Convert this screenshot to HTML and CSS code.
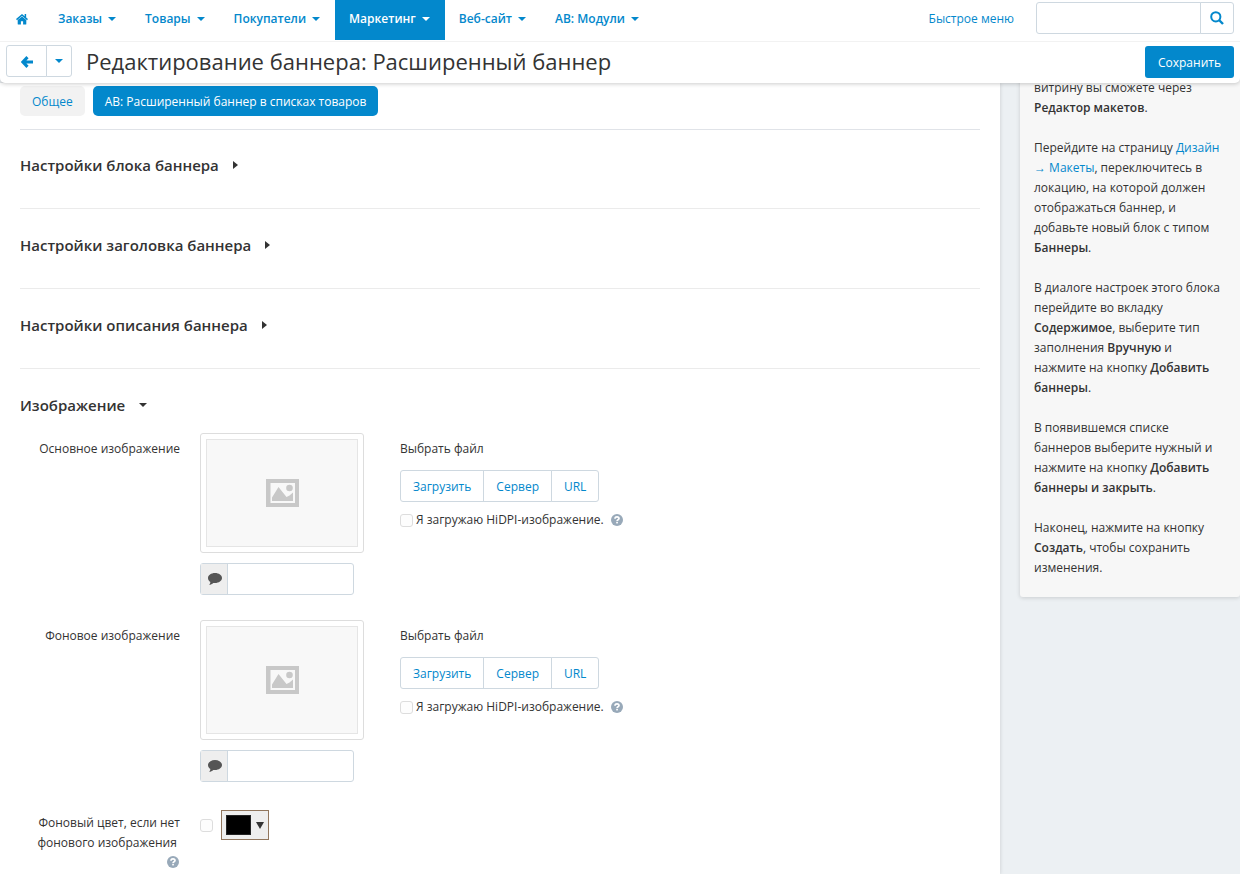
FILE: index.html
```html
<!DOCTYPE html>
<html lang="ru">
<head>
<meta charset="utf-8">
<title>Редактирование баннера: Расширенный баннер</title>
<link rel="stylesheet" href="styles.css">
</head>
<body>
<svg class="sprite" aria-hidden="true">
  <symbol id="i-help" viewBox="0 0 12 12">
    <circle cx="6" cy="6" r="6" fill="currentColor"/>
    <path d="M4 4.700C4 3.400 4.900 2.800 6 2.800s2 .7 2 1.700C8 5.800 6.100 5.700 6.100 7" fill="none" stroke="#fff" stroke-width="1.700"/>
    <rect x="5.200" y="7.800" width="1.700" height="1.600" fill="#fff"/>
  </symbol>
  <symbol id="i-comment" viewBox="0 0 14 12">
    <path d="M7 0c3.900 0 7 2.200 7 5s-3.100 5-7 5c-.6 0-1.200 0-1.700-.1C4.200 10.900 2.800 11.600 1.200 11.800c.7-.8 1.100-1.600 1.200-2.700C.9 8.200 0 6.700 0 5c0-2.800 3.100-5 7-5z" fill="currentColor"/>
  </symbol>
  <symbol id="i-image" viewBox="0 0 33 28">
    <path fill-rule="evenodd" d="M0 0h33v28H0zM4.500 4v20h24.500V4z" fill="currentColor"/>
    <path d="M6 22v-3.500L12.500 8l8 10 3-1.500 3.500-3V22z" fill="currentColor"/>
    <circle cx="23.500" cy="9" r="3.300" fill="currentColor"/>
  </symbol>
</svg>

<header class="header">
  <nav class="nav">
    <a class="nav-item nav-home" href="#" aria-label="Главная">
      <svg width="12" height="11" viewBox="0 0 12 11"><path d="M6 2.400 1.700 5.900V10c0 .4.3.6.6.6H4.900V7.300h2.200v3.300h2.600c.4 0 .6-.3.6-.6V5.900z" fill="currentColor"/><path d="M.5 5.600 6 1l5.500 4.600M9.400 0v3.500" fill="none" stroke="currentColor" stroke-width="1.500"/></svg>
    </a>
    <a class="nav-item" href="#">Заказы<i class="caret"></i></a>
    <a class="nav-item" href="#">Товары<i class="caret"></i></a>
    <a class="nav-item" href="#">Покупатели<i class="caret"></i></a>
    <a class="nav-item active" href="#">Маркетинг<i class="caret"></i></a>
    <a class="nav-item" href="#">Веб-сайт<i class="caret"></i></a>
    <a class="nav-item" href="#">АВ: Модули<i class="caret"></i></a>
    <a class="quick" href="#">Быстрое меню</a>
    <form class="search">
      <input type="text" aria-label="Поиск">
      <button type="button" aria-label="Найти">
        <svg width="14" height="14" viewBox="0 0 14 14" fill="none" stroke="currentColor"><circle cx="5.800" cy="5.800" r="4.600" stroke-width="2"/><path d="M9 9l4 4" stroke-width="2.400"/></svg>
      </button>
    </form>
  </nav>
  <div class="titlebar">
    <div class="group">
      <button class="back" type="button" aria-label="Назад">
        <svg width="12" height="12" viewBox="0 0 12 12" fill="none" stroke="currentColor" stroke-width="3"><path d="M6.500 1.100 1.900 6l4.600 4.900M2 6h10"/></svg>
      </button>
      <button class="back-menu" type="button" aria-label="История"><i class="caret"></i></button>
    </div>
    <h1>Редактирование баннера: Расширенный баннер</h1>
    <button class="save" type="button">Сохранить</button>
  </div>
</header>

<div class="page">
  <main class="main">
    <div class="tabs">
      <a class="tab" href="#">Общее</a>
      <a class="tab active" href="#">АВ: Расширенный баннер в списках товаров</a>
    </div>
    <section class="section"><h2>Настройки блока баннера<i class="caret right"></i></h2></section>
    <section class="section"><h2>Настройки заголовка баннера<i class="caret right"></i></h2></section>
    <section class="section"><h2>Настройки описания баннера<i class="caret right"></i></h2></section>
    <section class="section open">
      <h2>Изображение<i class="caret"></i></h2>
      <div class="fields">
        <div class="field">
          <label class="name" for="alt-main">Основное изображение</label>
          <div class="preview">
            <div class="frame"><div class="empty"><svg width="33" height="28"><use href="#i-image"/></svg></div></div>
            <div class="alt"><span><svg width="14" height="12"><use href="#i-comment"/></svg></span><input id="alt-main" type="text"></div>
          </div>
          <div class="file">
            <div>Выбрать файл</div>
            <div class="group choices"><button type="button">Загрузить</button><button type="button">Сервер</button><button type="button">URL</button></div>
            <label class="check"><input type="checkbox">Я загружаю HiDPI-изображение.<svg class="help" width="12" height="12"><use href="#i-help"/></svg></label>
          </div>
        </div>
        <div class="field">
          <label class="name" for="alt-back">Фоновое изображение</label>
          <div class="preview">
            <div class="frame"><div class="empty"><svg width="33" height="28"><use href="#i-image"/></svg></div></div>
            <div class="alt"><span><svg width="14" height="12"><use href="#i-comment"/></svg></span><input id="alt-back" type="text"></div>
          </div>
          <div class="file">
            <div>Выбрать файл</div>
            <div class="group choices"><button type="button">Загрузить</button><button type="button">Сервер</button><button type="button">URL</button></div>
            <label class="check"><input type="checkbox">Я загружаю HiDPI-изображение.<svg class="help" width="12" height="12"><use href="#i-help"/></svg></label>
          </div>
        </div>
        <div class="field">
          <label class="name" for="use-color">Фоновый цвет, если нет фонового изображения&nbsp;<svg class="help" width="12" height="12"><use href="#i-help"/></svg></label>
          <div class="color">
            <input id="use-color" type="checkbox">
            <button class="picker" type="button" aria-label="Выбрать цвет"><span class="swatch"></span><svg width="8" height="7" viewBox="0 0 8 7"><path d="M0 0h8L4 7z" fill="currentColor"/></svg></button>
          </div>
        </div>
      </div>
    </section>
  </main>
  <aside class="side">
    <div class="note">
      <p>витрину вы сможете через <b>Редактор макетов</b>.</p>
      <p>Перейдите на страницу <a href="#">Дизайн → Макеты</a>, переключитесь в локацию, на которой должен отображаться баннер, и добавьте новый блок с типом <b>Баннеры</b>.</p>
      <p>В диалоге настроек этого блока перейдите во вкладку <b>Содержимое</b>, выберите тип заполнения <b>Вручную</b> и нажмите на кнопку <b>Добавить баннеры</b>.</p>
      <p>В появившемся списке баннеров выберите нужный и нажмите на кнопку <b>Добавить баннеры и закрыть</b>.</p>
      <p>Наконец, нажмите на кнопку <b>Создать</b>, чтобы сохранить изменения.</p>
    </div>
  </aside>
</div>
</body>
</html>
```
FILE: styles.css
```css
* { box-sizing: border-box; }
body {
  margin: 0;
  min-height: 100vh;
  display: flex;
  flex-direction: column;
  background: #ecf0f3;
  color: #333;
  font: 12px/20px "Open Sans", "Noto Sans", sans-serif;
}
a { color: #0388cc; text-decoration: none; }
b { font-weight: 600; }
button, input { font: inherit; margin: 0; }
svg { display: block; }
.sprite { position: absolute; width: 0; height: 0; }

.caret {
  display: inline-block;
  border: 4px solid transparent;
  border-top-color: currentColor;
  border-bottom: 0;
}
.caret.right {
  border: 4px solid transparent;
  border-left: 5px solid currentColor;
  border-right: 0;
}

.header {
  position: relative;
  z-index: 2;
  background: #fff;
  border-radius: 0 0 5px 5px;
  box-shadow: 0 1px 4px rgba(0, 0, 0, .2);
}
.nav {
  display: flex;
  align-items: flex-start;
  height: 42px;
  padding: 0 6px 0 1px;
  border-bottom: 1px solid #f2f2f2;
}
.nav-item {
  display: flex;
  align-items: center;
  gap: 6px;
  height: 40px;
  padding: 0 15px 2px 14px;
  font-weight: 600;
}
.nav-home { padding: 0 16px 2px 15px; }
.nav-item.active { background: #0388cc; color: #fff; }
.quick { margin-left: auto; padding: 9px 22px 0 0; }
.search { display: flex; width: 198px; height: 32px; margin-top: 2px; }
.search input {
  flex: 1;
  min-width: 0;
  border: 1px solid #ced8e0;
  border-radius: 3px 0 0 3px;
}
.search button {
  width: 34px;
  margin-left: -1px;
  padding: 0 9px;
  border: 1px solid #ced8e0;
  border-radius: 0 3px 3px 0;
  background: #fff;
  color: #0388cc;
}

.titlebar {
  display: flex;
  align-items: flex-start;
  height: 41px;
  padding: 3px 6px 0;
}
.titlebar h1 {
  margin: 0 auto 0 14px;
  font-size: 22px;
  font-weight: 400;
  line-height: 32px;
}
.group { display: flex; }
.group button {
  display: flex;
  align-items: center;
  justify-content: center;
  height: 32px;
  padding: 1px 12px 0;
  border: 1px solid #ced8e0;
  background: #fff;
  color: #0388cc;
}
.group button + button { margin-left: -1px; }
.group button:first-child { border-radius: 3px 0 0 3px; }
.group button:last-child { border-radius: 0 3px 3px 0; }
.group .back { width: 41px; }
.group .back-menu { width: 26px; padding: 0; }
.save {
  height: 32px;
  margin-top: 1px;
  padding: 1px 13px 0;
  border: 0;
  border-radius: 3px;
  background: #0388cc;
  color: #fff;
}

.page { flex: 1; display: flex; gap: 20px; }
.main {
  flex: 1;
  padding: 3px 20px 0;
  background: #fff;
  box-shadow: 0 0 4px rgba(0, 0, 0, .15);
}
.tabs {
  display: flex;
  gap: 8px;
  padding-bottom: 13px;
  border-bottom: 1px solid #e0e3e8;
}
.tab {
  padding: 6px 12px 4px;
  border-radius: 5px;
  background: #f2f2f2;
}
.tab.active { background: #0388cc; color: #fff; }

.section { height: 80px; padding-top: 26px; border-bottom: 1px solid #ebebeb; }
.tabs + .section { height: 79px; padding-top: 25px; }
.section.open { height: auto; border: 0; }
.section h2 {
  display: flex;
  align-items: center;
  gap: 14px;
  margin: 0;
  font-size: 15px;
  font-weight: 600;
  line-height: 20px;
}
.fields { display: grid; gap: 25px; padding-top: 18px; }
.field { display: flex; gap: 20px; }
.name { width: 160px; padding-top: 6px; text-align: right; }
.help { color: #98a9b9; }
.name .help { margin: 3px 1px 0 auto; }
.preview { width: 180px; }
.frame {
  width: 164px;
  height: 120px;
  padding: 5px;
  border: 1px solid #ddd;
  border-radius: 3px;
}
.empty {
  display: flex;
  align-items: center;
  justify-content: center;
  height: 100%;
  border: 1px solid #e5e5e5;
  background: #f8f8f8;
  color: #c8c8c8;
}
.alt {
  display: flex;
  width: 154px;
  height: 32px;
  margin-top: 10px;
  border: 1px solid #ced8e0;
  border-radius: 3px;
}
.alt span {
  display: flex;
  align-items: center;
  width: 27px;
  padding-left: 7px;
  border-right: 1px solid #ced8e0;
  background: #eee;
  color: #555;
}
.alt input { flex: 1; min-width: 0; border: 0; background: none; }
.file { padding-top: 6px; }
.choices { margin: 11px 0 8px; }
.check { display: flex; align-items: center; gap: 3px; }
.check .help { margin-left: 4px; }
input[type="checkbox"] {
  appearance: none;
  width: 13px;
  height: 13px;
  border: 1px solid #ddd;
  border-radius: 3px;
  background: #fdfdfd;
}
.color { display: flex; align-items: center; gap: 8px; height: 36px; }
.picker {
  display: flex;
  align-items: center;
  gap: 5px;
  width: 48px;
  height: 30px;
  padding: 0 4px;
  border: 1px solid #91765d;
  background: #eee;
  color: #333;
}
.swatch { width: 25px; height: 20px; border: 1px solid #222; background: #000; }

.side { width: 220px; }
.note {
  margin-top: -5px;
  padding: 0 16px 19px 14px;
  border-radius: 0 0 3px 3px;
  background: #f7f7f7;
  box-shadow: 0 1px 4px rgba(0, 0, 0, .15);
}
.note p { margin: 0 0 20px; }
.note p:last-child { margin: 0; }
```
